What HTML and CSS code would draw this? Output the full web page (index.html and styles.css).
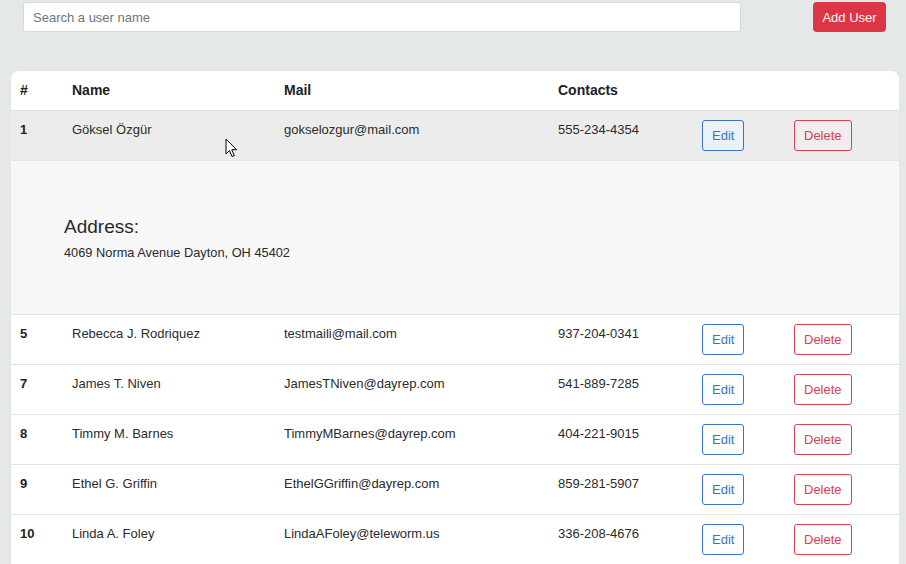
FILE: index.html
```html
<!DOCTYPE html>
<html>
<head>
<meta charset="utf-8">
<link rel="stylesheet" href="styles.css">
</head>
<body>
<div class="topbar">
  <input class="search" type="text" placeholder="Search a user name">
  <button class="add-btn">Add User</button>
</div>
<div class="card">
  <table class="users">
    <colgroup>
      <col class="c1"><col class="c2"><col class="c3"><col class="c4"><col class="c5"><col class="c6">
    </colgroup>
    <thead>
      <tr><th>#</th><th>Name</th><th>Mail</th><th>Contacts</th><th></th><th></th></tr>
    </thead>
    <tbody>
      <tr class="active">
        <td class="num">1</td><td>Göksel Özgür</td><td>gokselozgur@mail.com</td><td>555-234-4354</td>
        <td><button class="btn edit">Edit</button></td><td><button class="btn del">Delete</button></td>
      </tr>
      <tr class="detail">
        <td colspan="6"><div class="detail-box"><div class="addr-title">Address:</div><div class="addr">4069 Norma Avenue Dayton, OH 45402</div></div></td>
      </tr>
      <tr>
        <td class="num">5</td><td>Rebecca J. Rodriquez</td><td>testmaili@mail.com</td><td>937-204-0341</td>
        <td><button class="btn edit">Edit</button></td><td><button class="btn del">Delete</button></td>
      </tr>
      <tr>
        <td class="num">7</td><td>James T. Niven</td><td>JamesTNiven@dayrep.com</td><td>541-889-7285</td>
        <td><button class="btn edit">Edit</button></td><td><button class="btn del">Delete</button></td>
      </tr>
      <tr>
        <td class="num">8</td><td>Timmy M. Barnes</td><td>TimmyMBarnes@dayrep.com</td><td>404-221-9015</td>
        <td><button class="btn edit">Edit</button></td><td><button class="btn del">Delete</button></td>
      </tr>
      <tr>
        <td class="num">9</td><td>Ethel G. Griffin</td><td>EthelGGriffin@dayrep.com</td><td>859-281-5907</td>
        <td><button class="btn edit">Edit</button></td><td><button class="btn del">Delete</button></td>
      </tr>
      <tr>
        <td class="num">10</td><td>Linda A. Foley</td><td>LindaAFoley@teleworm.us</td><td>336-208-4676</td>
        <td><button class="btn edit">Edit</button></td><td><button class="btn del">Delete</button></td>
      </tr>
    </tbody>
  </table>
</div>
<svg class="cursor" width="13" height="20" viewBox="0 0 13 20"><path d="M1 1 L1 16 L4.5 12.5 L7 18.5 L9.3 17.5 L6.8 11.7 L11.5 11.7 Z" fill="#fff" stroke="#000" stroke-width="1" stroke-linejoin="round"/></svg>
</body>
</html>
```
FILE: styles.css
```css
html, body {
  margin: 0;
  padding: 0;
}
body {
  background: #e4e8e8;
  font-family: "Liberation Sans", Arial, sans-serif;
  color: #222;
  height: 564px;
  overflow: hidden;
  position: relative;
}
.topbar {
  display: flex;
  align-items: flex-start;
  justify-content: space-between;
  padding: 2px 20px 0 23px;
  height: 31px;
}
.search {
  width: 718px;
  height: 30px;
  box-sizing: border-box;
  border: 1px solid #d6dadc;
  border-radius: 3px;
  background: #fff;
  padding: 0 9px;
  font-family: "Liberation Sans", Arial, sans-serif;
  font-size: 13px;
  outline: none;
}
.search::placeholder {
  color: #6f7478;
}
.add-btn {
  width: 73px;
  height: 30px;
  border: none;
  border-radius: 4px;
  background: #dc3545;
  color: #fff;
  font-family: "Liberation Sans", Arial, sans-serif;
  font-size: 13px;
  padding: 0;
}
.card {
  margin: 38px 7px 0 11px;
  background: #fff;
  border-radius: 8px 8px 0 0;
  width: 888px;
  overflow: hidden;
}
.users {
  width: 888px;
  border-collapse: collapse;
  table-layout: fixed;
}
.c1 { width: 52px; }
.c2 { width: 212px; }
.c3 { width: 274px; }
.c4 { width: 144px; }
.c5 { width: 92px; }
.c6 { width: 114px; }
.users th {
  text-align: left;
  font-size: 14px;
  font-weight: bold;
  color: #222;
  padding: 10px 9px;
  line-height: 19px;
  border-bottom: 1px solid #dcdfe2;
}
.users td {
  font-size: 13px;
  line-height: 18px;
  padding: 10px 9px 9px;
  vertical-align: top;
  color: #2b2b2b;
  border-top: 1px solid #e1e4e6;
}
.users td.num {
  font-weight: bold;
  color: #222;
}
.users tr.active td {
  background: #ececec;
  border-top: none;
}
.users tr.detail td {
  background: #f7f7f7;
  padding: 0;
  border-top: 1px solid #e6e8e8;
}
.detail-box {
  padding: 54px 44px 52px 53px;
}
.addr-title {
  font-size: 19px;
  line-height: 24px;
  color: #2a2a2a;
}
.addr {
  margin-top: 5px;
  font-size: 12.8px;
  line-height: 18px;
  color: #2a2a2a;
}
.btn {
  height: 31px;
  margin-top: -1px;
  box-sizing: border-box;
  background: transparent;
  border-radius: 3px;
  font-family: "Liberation Sans", Arial, sans-serif;
  font-size: 13px;
  padding: 0 9px;
  display: block;
}
.edit {
  border: 1px solid #3b74c4;
  color: #3b74c4;
}
.active .edit {
  background: #eaf1fb;
}
.del {
  border: 1px solid #d4424f;
  color: #d4424f;
}
.active .del {
  background: #f1eced;
}
.cursor {
  position: absolute;
  left: 225px;
  top: 138px;
}
```
